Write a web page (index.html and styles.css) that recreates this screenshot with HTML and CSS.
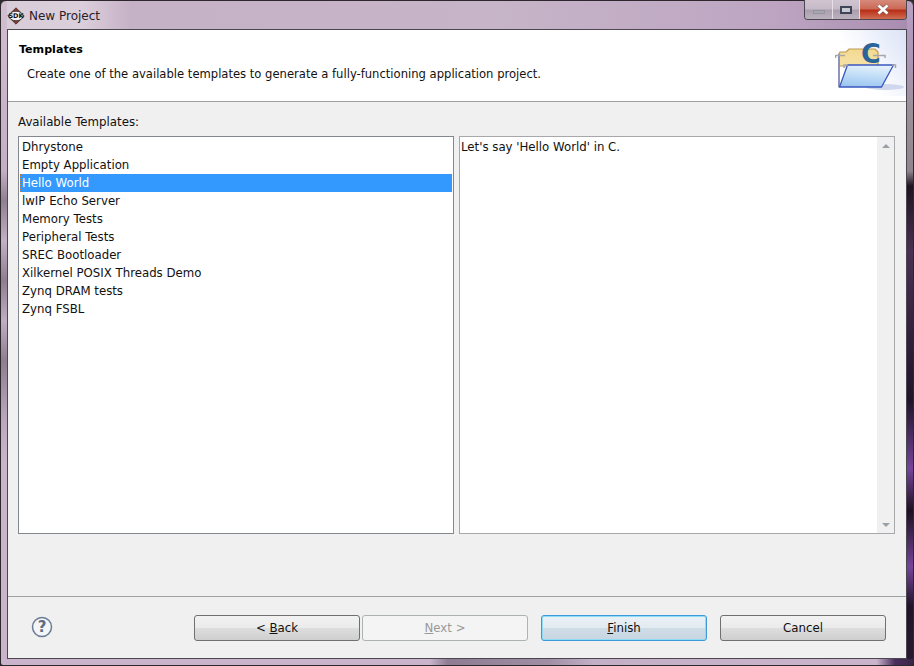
FILE: index.html
```html
<!DOCTYPE html>
<html lang="en">
<head>
<meta charset="utf-8">
<title>New Project</title>
<link rel="stylesheet" href="styles.css">
</head>
<body>
<div class="window">
  <div class="titlebar">
    <svg class="app-icon" width="18" height="18" viewBox="0 0 18 18">
      <path d="M9 .8 17.200 9 9 17.200 .8 9Z" fill="#8c3a30" stroke="#3a2a28" stroke-width=".8"/>
      <ellipse cx="9" cy="9" rx="7" ry="4.800" fill="#f6f2f0" stroke="#222" stroke-width=".8"/>
      <text class="sdk" x="9" y="11.300">SDK</text>
    </svg>
    <span class="title-text">New Project</span>
    <div class="controls">
      <div class="ctl ctl-min"><span class="min-glyph"></span></div>
      <div class="ctl ctl-max"><span class="max-glyph"></span></div>
      <div class="ctl ctl-close">
        <svg width="14" height="11" viewBox="0 0 14 11"><path d="M2.500 1.500 11.500 9.500M11.500 1.500 2.500 9.500" stroke="#8a5a50" stroke-width="4" fill="none"/><path d="M2.500 1.500 11.500 9.500M11.500 1.500 2.500 9.500" stroke="#fff" stroke-width="2.600" fill="none"/></svg>
      </div>
    </div>
  </div>
  <div class="dialog">
    <header class="banner">
      <div class="banner-text">
        <h1 class="banner-title">Templates</h1>
        <p class="banner-desc">Create one of the available templates to generate a fully-functioning application project.</p>
      </div>
      <div class="banner-art">
        <svg width="71" height="66" viewBox="0 0 71 66">
          <defs>
            <linearGradient id="panel" x1="0.600" y1="0" x2="0.400" y2="1">
              <stop offset="0" stop-color="#e6f2fc"/>
              <stop offset="0.450" stop-color="#c4dff7"/>
              <stop offset="1" stop-color="#9cc6f0"/>
            </linearGradient>
            <linearGradient id="back" x1="0" y1="0" x2="0" y2="1">
              <stop offset="0" stop-color="#f3d98f"/>
              <stop offset="1" stop-color="#fbeec6"/>
            </linearGradient>
          </defs>
          <ellipse cx="50" cy="57" rx="19" ry="3" fill="#c0c9e4" opacity=".7"/>
          <path d="M4 57V24l1-2h6l3-3h26l3 3v14H4Z" fill="url(#back)" stroke="#c09a50" stroke-width="1.200"/>
          <path d="M4 24V57" stroke="#7f88c4" stroke-width="1.600"/>
          <path d="M.5 28V25.500H10M38 25.500H50V28" fill="none" stroke="#a8a8a8" stroke-width="1.500"/>
          <text class="art-c" x="26" y="33">C</text>
          <path d="M12.500 35H58.500L46.500 57H4.500Z" fill="url(#panel)" stroke="#3a58c0" stroke-width="1.300"/>
          <path d="M9 38V35H13M57 35H60.500V38" fill="none" stroke="#a8a8a8" stroke-width="1.500"/>
        </svg>
      </div>
    </header>
    <main class="body">
      <div class="avail-label">Available Templates:</div>
      <div class="panes">
        <ul class="list">
          <li class="item">Dhrystone</li>
          <li class="item">Empty Application</li>
          <li class="item item-selected">Hello World</li>
          <li class="item">lwIP Echo Server</li>
          <li class="item">Memory Tests</li>
          <li class="item">Peripheral Tests</li>
          <li class="item">SREC Bootloader</li>
          <li class="item">Xilkernel POSIX Threads Demo</li>
          <li class="item">Zynq DRAM tests</li>
          <li class="item">Zynq FSBL</li>
        </ul>
        <div class="desc">
          <div class="desc-text">Let's say 'Hello World' in C.</div>
          <div class="scrollbar">
            <span class="arrow arrow-up"></span>
            <span class="arrow arrow-down"></span>
          </div>
        </div>
      </div>
    </main>
    <footer class="footer">
      <svg class="help" width="22" height="22" viewBox="0 0 22 22">
        <circle cx="11" cy="11" r="9.500" fill="#f4f5f7" stroke="#6a7c96" stroke-width="1.500"/>
        <text class="help-q" x="11" y="16">?</text>
      </svg>
      <div class="buttons">
        <button class="btn">&lt; <u>B</u>ack</button>
        <button class="btn btn-disabled"><u>N</u>ext &gt;</button>
        <button class="btn btn-default"><u>F</u>inish</button>
        <button class="btn btn-cancel">Cancel</button>
      </div>
    </footer>
  </div>
</div>
</body>
</html>
```
FILE: styles.css
```css
* { box-sizing: border-box; }
html, body { margin: 0; padding: 0; background: #2a2a2a; }
body { width: 914px; height: 666px; overflow: hidden; font-family: "DejaVu Sans", sans-serif; font-size: 11.750px; color: #000; }
.window {
  width: 914px; height: 666px; display: flex; flex-direction: column;
  padding: 0 6px 6px 6px;
  border: 1px solid #2e282e; border-radius: 6px 6px 3px 3px;
  background:
    linear-gradient(90deg, #c9b4cc 0, #c9b4cc 47%, #8e7c92 49%, #a08ea4 60%, #c4b0c6 65%, #c9b4cc 96%, #4a2f5c 98%, #3a2448 100%) left bottom / 100% 6px no-repeat,
    linear-gradient(180deg, #b9a0c4 0, #ab94b6 60px, #9a9098 110px, #8e868e 170px, #1e1420 185px, #4a3052 250px, #20142a 400px, #74449a 468px, #1d1020 510px, #74449a 566px, #20142a 605px, #2a1a30 666px) right top / 6px 100% no-repeat,
    linear-gradient(180deg, #d0bfd0 0, #c4aec4 170px, #8f8090 200px, #c2b0c4 240px, #8e7e90 280px, #bfaec2 320px, #8e7e90 360px, #bba8be 420px, #c9b4cc 460px, #c9b4cc 100%) left top / 6px 100% no-repeat,
    linear-gradient(90deg, #d8ccd8 0, #dccfdc 80px, #c6b2c6 130px, #c6b4c8 55%, #bda5c2 85%, #a88cb0 100%);
}
.titlebar { height: 28px; flex: none; display: flex; align-items: center; position: relative; padding-top: 2px; }
.app-icon { margin-right: 4px; flex: none; }
.sdk { font-family: "DejaVu Sans", sans-serif; font-weight: 700; font-size: 6.500px; fill: #111; text-anchor: middle; }
.title-text { font-size: 12px; color: #2a2028; }
.controls { position: absolute; right: 0; top: -1px; height: 20px; display: flex; border: 1px solid #4c4650; border-top: 0; border-radius: 0 0 4px 4px; overflow: hidden; }
.ctl { height: 100%; display: flex; align-items: center; justify-content: center; border-right: 1px solid #e6dfe8; background: linear-gradient(#cfc4d0 0%, #c6bac8 48%, #a99fac 52%, #bcb1be 100%); }
.ctl-min { width: 28px; }
.ctl-max { width: 27px; }
.ctl-close { width: 46px; border-right: 0; background: linear-gradient(#d68a7a 0%, #cc6a58 46%, #b82e16 54%, #d06e54 100%); }
.min-glyph { width: 12px; height: 4px; margin-top: 4px; background: #a9a5b0; border: 1px solid #96929e; }
.max-glyph { width: 12px; height: 8px; border: 2px solid #3d4556; background: #c8c8d0; }
.dialog { flex: 1; min-height: 0; display: flex; flex-direction: column; border: 1px solid #4c4650; background: #f0f0f0; }
.banner { height: 72px; flex: none; background: #fff; border-bottom: 1px solid #a0a0a0; display: flex; justify-content: space-between; }
.banner-text { padding: 12px 0 0 11px; }
.banner-title { margin: 0; font-size: 11.100px; font-weight: 700; line-height: 15px; }
.banner-desc { margin: 10px 0 0 8px; font-size: 11.590px; line-height: 15px; color: #111; }
.banner-art { width: 71px; height: 66px; background: linear-gradient(235deg, #dce3f5 0%, #e9eefa 25%, #f4f6fd 40%, #fff 62%); }
.art-c { font-family: "DejaVu Sans", sans-serif; font-weight: 700; font-size: 27px; fill: #2a6499; }
.body { flex: 1; min-height: 0; padding: 13px 11px 0 10px; }
.avail-label { height: 15px; line-height: 15px; font-size: 11.800px; color: #111; }
.panes { display: flex; gap: 5px; margin-top: 6px; height: 398px; }
.list { width: 436px; margin: 0; padding: 1px; list-style: none; background: #fff; border: 1px solid #828790; }
.item { height: 18px; line-height: 18px; padding-left: 2px; color: #111; }
.item-selected { background: #3399ff; color: #fff; outline: 1px dotted #b87a3a; outline-offset: -1px; }
.desc { width: 436px; background: #fff; border: 1px solid #a8a8ac; display: flex; justify-content: space-between; }
.desc-text { padding: 1px 0 0 1px; line-height: 18px; color: #111; }
.scrollbar { width: 17px; background: #f0f0f0; display: flex; flex-direction: column; justify-content: space-between; align-items: center; padding: 7px 0 6px; }
.arrow { width: 0; height: 0; border-left: 4px solid transparent; border-right: 4px solid transparent; }
.arrow-up { border-bottom: 4px solid #9aa0a8; }
.arrow-down { border-top: 4px solid #9aa0a8; }
.footer { height: 62px; flex: none; border-top: 1px solid #a0a0a0; display: flex; align-items: flex-start; justify-content: space-between; padding: 18px 20px 0 23px; }
.help { margin-top: 1px; flex: none; }
.help-q { font-family: "DejaVu Sans", sans-serif; font-weight: 700; font-size: 15px; fill: #5a6c86; text-anchor: middle; }
.buttons { display: flex; }
.btn { width: 166px; height: 26px; padding: 0; margin: 0; font: inherit; color: #111; border: 1px solid #707070; border-radius: 3px; background: linear-gradient(#f2f2f2 0%, #ebebeb 48%, #dddddd 52%, #cfcfcf 100%); }
.btn + .btn { margin-left: 2px; }
.btn + .btn-disabled { color: #999; border-color: #adb2b5; background: #f4f4f4; }
.btn + .btn-default { margin-left: 13px; border-color: #3c9ad6; box-shadow: inset 0 0 0 1px #8fdcf5; background: linear-gradient(#eaf1f6 0%, #e2ebf1 48%, #cfdde7 52%, #c6d5e0 100%); }
.btn + .btn-cancel { margin-left: 13px; }
```
